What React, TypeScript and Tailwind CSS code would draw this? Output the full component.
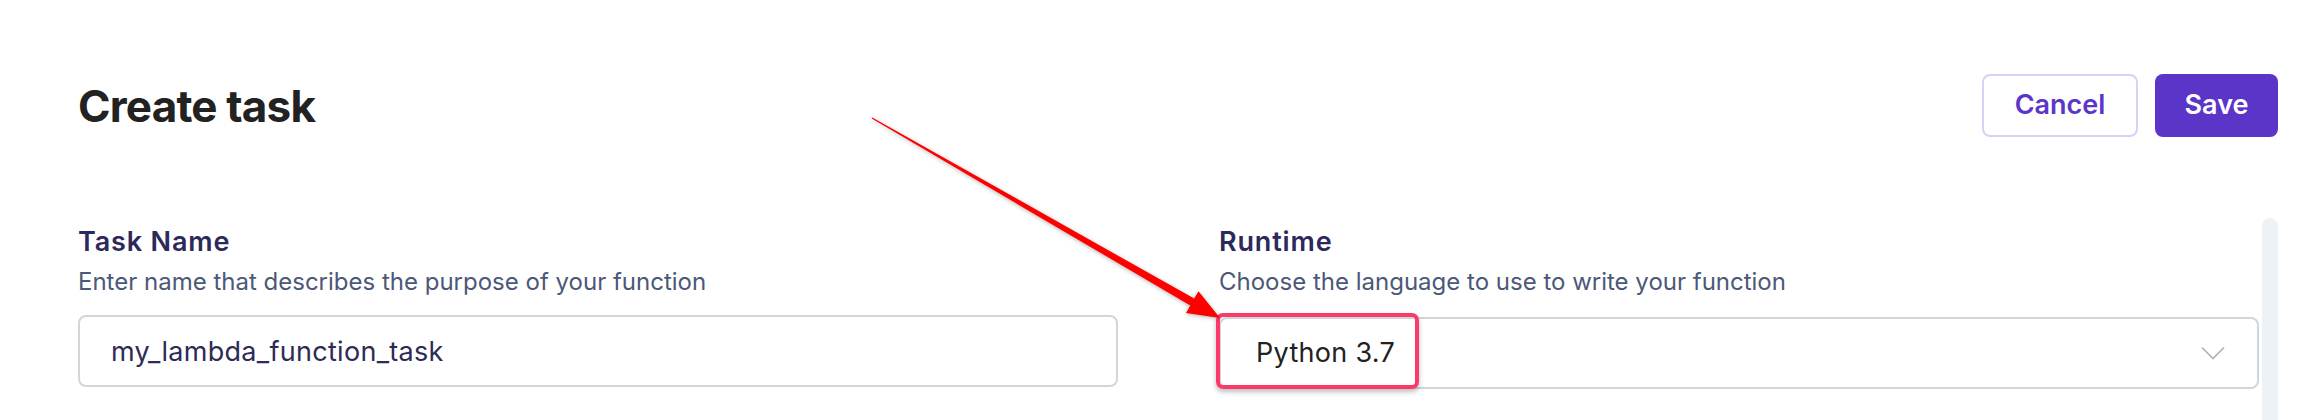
import { useState } from "react";

const Chevron = () => (
  <svg width="24" height="14" viewBox="0 0 24 14" fill="none">
    <polyline points="1,1.5 12,12.5 23,1.5" stroke="#a9b2bb" strokeWidth="1.6" />
  </svg>
);

// red annotation arrow, drawn over the page
function Arrow() {
  const tail = [872, 118];
  const tip = [1220, 318];
  const dx = tip[0] - tail[0];
  const dy = tip[1] - tail[1];
  const len = Math.hypot(dx, dy);
  const ux = dx / len;
  const uy = dy / len;
  const nx = -uy;
  const ny = ux;
  const headLen = 32;
  const bx = tip[0] - headLen * ux;
  const by = tip[1] - headLen * uy;
  const pt = (x: number, y: number) => `${x.toFixed(1)},${y.toFixed(1)}`;
  const points = [
    pt(tail[0] + 0.7 * nx, tail[1] + 0.7 * ny),
    pt(bx + 4 * nx, by + 4 * ny),
    pt(bx + 12.5 * nx, by + 12.5 * ny),
    pt(tip[0], tip[1]),
    pt(bx - 12.5 * nx, by - 12.5 * ny),
    pt(bx - 4 * nx, by - 4 * ny),
    pt(tail[0] - 0.7 * nx, tail[1] - 0.7 * ny),
  ].join(" ");

  return (
    <svg
      className="absolute left-0 top-0 pointer-events-none drop-shadow-[0_1px_2px_rgba(0,0,0,0.3)]"
      width="2302"
      height="420"
    >
      <polygon points={points} fill="#ff0000" />
    </svg>
  );
}

export default function App() {
  const [taskName, setTaskName] = useState("my_lambda_function_task");

  return (
    <div className="relative w-full h-[420px] overflow-hidden bg-white font-['Inter','Liberation_Sans',sans-serif]">
      {/* header */}
      <div className="flex justify-between items-center pl-[78px] pr-[24px] pt-[74px]">
        <h1 className="text-[44px] leading-[54px] font-bold tracking-[-0.8px] text-[#222222]">
          Create task
        </h1>
        <div className="flex gap-[17px]">
          <button className="w-[156px] h-[63px] rounded-[8px] border-2 border-[#d8d1f6] bg-white text-[27px] font-semibold text-[#5b36c9]">
            Cancel
          </button>
          <button className="w-[123px] h-[63px] rounded-[8px] bg-[#5a35c8] text-[27px] font-semibold text-white">
            Save
          </button>
        </div>
      </div>

      {/* form */}
      <div className="flex mt-[81px] h-[300px]">
        <div className="flex-1 grid grid-cols-2 gap-x-[101px] pl-[78px] pt-[8px]">
          <div className="flex flex-col">
            <label className="text-[27px] leading-[32px] font-semibold tracking-[0.85px] text-[#2c2a5c]">
              Task Name
            </label>
            <p className="mt-[9px] text-[24px] leading-[30px] text-[#4b5878]">
              Enter name that describes the purpose of your function
            </p>
            <div className="mt-[18px] h-[72px] flex items-center rounded-[8px] border-2 border-[#cfd6dc] pl-[31px] pt-[3px]">
              <input
                value={taskName}
                onChange={(e) => setTaskName(e.target.value)}
                className="w-full outline-none bg-transparent text-[27px] tracking-[0.3px] text-[#2d2b55]"
              />
            </div>
          </div>

          <div className="flex flex-col">
            <label className="text-[27px] leading-[32px] font-semibold tracking-[0.85px] text-[#2c2a5c]">
              Runtime
            </label>
            <p className="mt-[9px] text-[24px] leading-[30px] text-[#4b5878]">
              Choose the language to use to write your function
            </p>
            <div className="relative mt-[20px] h-[72px] flex items-center justify-between rounded-[8px] border-2 border-[#cfd6dc] pl-[35px] pr-[32px]">
              <span className="text-[27px] tracking-[0.3px] text-[#222222] pt-[1px]">Python 3.7</span>
              <Chevron />
              {/* highlight box */}
              <div className="absolute left-[-5px] top-[-6px] w-[203px] h-[76px] rounded-[7px] border-4 border-[#fb3a6a] shadow-[0_3px_5px_rgba(0,0,0,0.25)]" />
            </div>
          </div>
        </div>
        <div className="ml-[3px] mr-[24px] w-[16px] rounded-full bg-[#edf2f7]" />
      </div>

      <Arrow />
    </div>
  );
}
